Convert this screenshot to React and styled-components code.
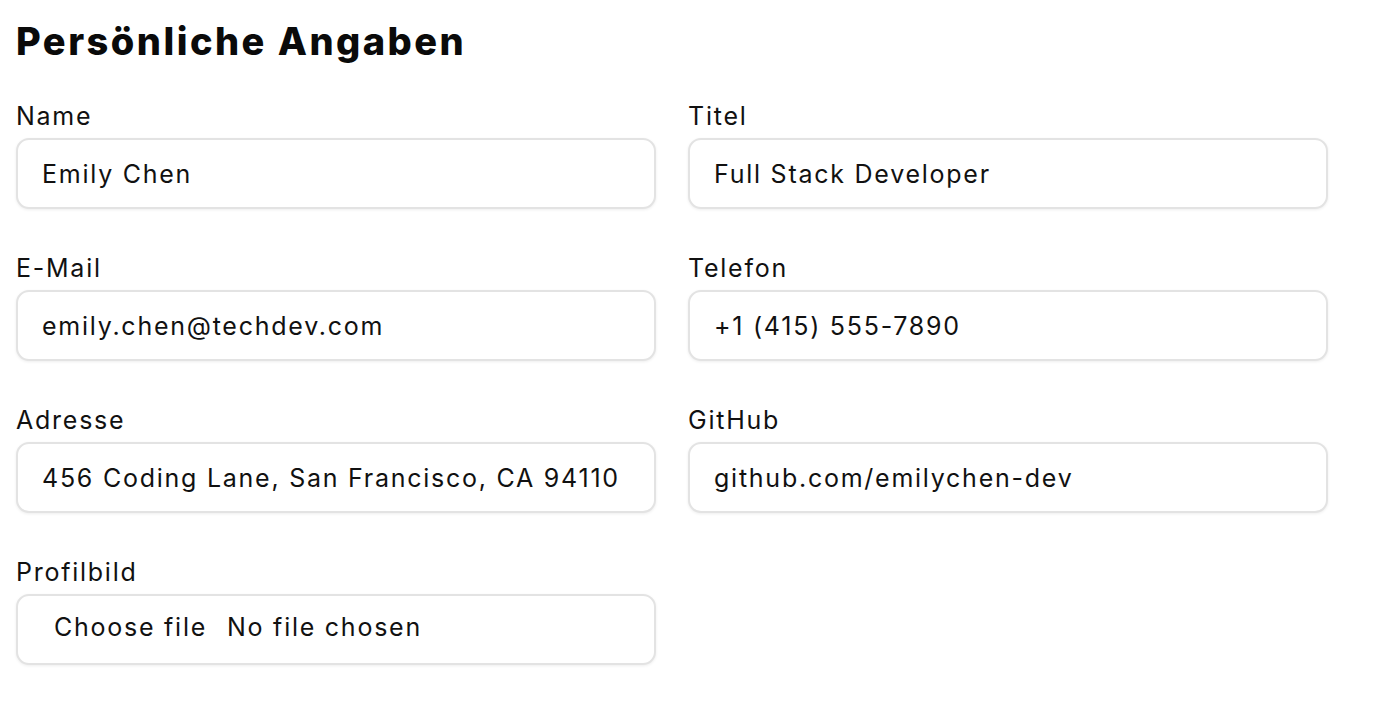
import React, { useState } from 'react';
import styled, { createGlobalStyle } from 'styled-components';

const GlobalStyle = createGlobalStyle`
  * { box-sizing: border-box; }
  body {
    margin: 0;
    background: #ffffff;
    color: #111111;
    font-family: Inter, "Noto Sans", sans-serif;
  }
`;

const fields = [
  { id: 'name', label: 'Name', value: 'Emily Chen' },
  { id: 'title', label: 'Titel', value: 'Full Stack Developer' },
  { id: 'email', label: 'E-Mail', value: 'emily.chen@techdev.com', type: 'email' },
  { id: 'phone', label: 'Telefon', value: '+1 (415) 555-7890', type: 'tel' },
  { id: 'address', label: 'Adresse', value: '456 Coding Lane, San Francisco, CA 94110' },
  { id: 'github', label: 'GitHub', value: 'github.com/emilychen-dev' },
];

function PhotoPicker() {
  const [fileName, setFileName] = useState('');

  function handleChange(e) {
    const file = e.target.files && e.target.files[0];
    setFileName(file ? file.name : '');
  }

  return (
    <FileBox>
      <HiddenFile id="photo" type="file" accept="image/*" onChange={handleChange} />
      <ChooseButton>Choose file</ChooseButton>
      <FileName>{fileName || 'No file chosen'}</FileName>
    </FileBox>
  );
}

function PersonalInfo() {
  return (
    <Section>
      <Heading>Persönliche Angaben</Heading>
      <FieldGrid>
        {fields.map((field) => (
          <Field key={field.id}>
            <Label htmlFor={field.id}>{field.label}</Label>
            <TextInput
              id={field.id}
              type={field.type || 'text'}
              defaultValue={field.value}
            />
          </Field>
        ))}
        <Field>
          <Label htmlFor="photo">Profilbild</Label>
          <PhotoPicker />
        </Field>
      </FieldGrid>
    </Section>
  );
}

export default function App() {
  return (
    <>
      <GlobalStyle />
      <PersonalInfo />
    </>
  );
}

const Section = styled.section`
  padding: 18px 16px 16px;
`;

const Heading = styled.h2`
  margin: 0 0 37px;
  font-size: 38px;
  line-height: 46px;
  font-weight: 800;
  letter-spacing: 0.065em;
  color: #0a0a0a;
`;

const FieldGrid = styled.div`
  display: grid;
  grid-template-columns: 640px 640px;
  column-gap: 32px;
  row-gap: 44px;
`;

const Field = styled.div`
  display: flex;
  flex-direction: column;
  gap: 7px;
`;

const Label = styled.label`
  font-size: 25px;
  line-height: 30px;
  letter-spacing: 0.07em;
  color: #111111;
`;

const boxStyles = `
  width: 100%;
  height: 71px;
  border: 2px solid #e3e3e3;
  border-radius: 13px;
  background: #ffffff;
  box-shadow: 0 1px 3px rgba(0, 0, 0, 0.07);
  font-family: Inter, "Noto Sans", sans-serif;
  font-size: 25px;
  letter-spacing: 0.07em;
  color: #111111;
`;

const TextInput = styled.input`
  ${boxStyles};
  padding: 0 24px;
  outline: none;
`;

const FileBox = styled.div`
  ${boxStyles};
  position: relative;
  display: flex;
  align-items: center;
  padding: 0 24px 5px;
`;

const HiddenFile = styled.input`
  position: absolute;
  inset: 0;
  width: 100%;
  height: 100%;
  opacity: 0;
  cursor: pointer;
`;

const ChooseButton = styled.span`
  padding: 0 6px 0 12px;
  margin-right: 14px;
`;

const FileName = styled.span`
  white-space: nowrap;
`;
